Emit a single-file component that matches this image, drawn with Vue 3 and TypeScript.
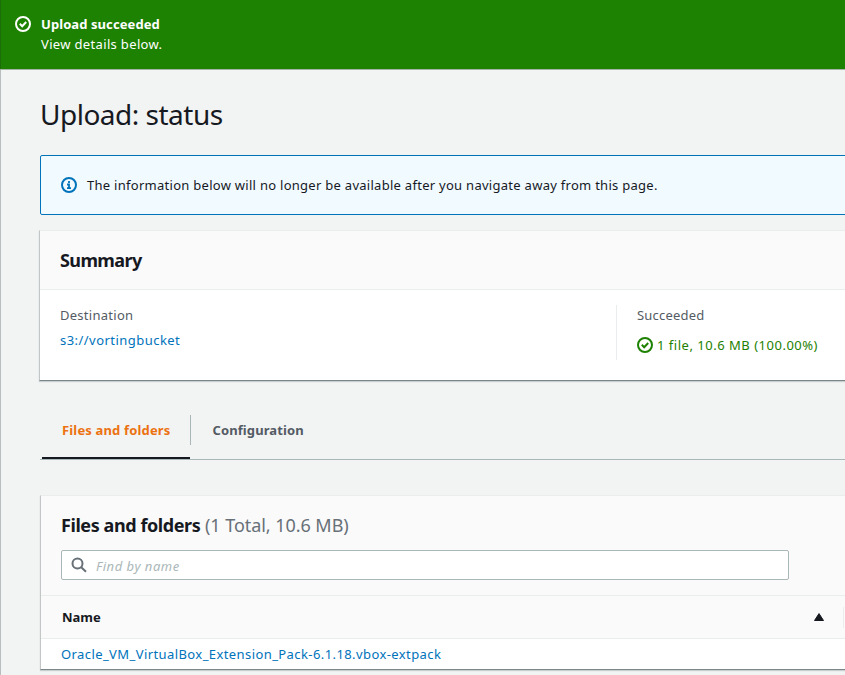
<script setup lang="ts">
import { ref } from 'vue'

interface UploadedFile {
  name: string
}

const tabs: string[] = ['Files and folders', 'Configuration']
const activeTab = ref(0)
const query = ref('')
const files: UploadedFile[] = [{ name: 'Oracle_VM_VirtualBox_Extension_Pack-6.1.18.vbox-extpack' }]
</script>

<template>
  <div class="page">
    <header class="flash">
      <svg class="icon" viewBox="0 0 16 16">
        <circle cx="8" cy="8" r="7" />
        <path d="M4.8 7.8 7.2 10.2 11.2 6" />
      </svg>
      <div class="flash-text">
        <strong><span class="t-flash">Upload succeeded</span></strong>
        <span class="t-view">View details below.</span>
      </div>
    </header>

    <main class="content">
      <h1><span class="t-title">Upload: status</span></h1>

      <div class="info">
        <svg class="icon" viewBox="0 0 16 16">
          <circle cx="8" cy="8" r="7" />
          <path class="thin" d="M8 4v2M6 7.5h2V11M6 11.2h4" />
        </svg>
        <span class="t-info">The information below will no longer be available after you navigate away from this page.</span>
      </div>

      <section class="card summary">
        <div class="card-head"><h2><span class="t-summary">Summary</span></h2></div>
        <div class="columns">
          <div class="column">
            <div class="label"><span class="t-dest">Destination</span></div>
            <a class="link"><span class="t-bucket">s3://vortingbucket</span></a>
          </div>
          <div class="column second">
            <div class="label"><span class="t-succ">Succeeded</span></div>
            <div class="success">
              <svg class="icon" viewBox="0 0 16 16">
                <circle cx="8" cy="8" r="7" />
                <path d="M4.8 7.8 7.2 10.2 11.2 6" />
              </svg>
              <span class="t-count">1 file, 10.6 MB (100.00%)</span>
            </div>
          </div>
        </div>
      </section>

      <nav class="tabs">
        <button
          v-for="(tab, i) in tabs"
          :key="tab"
          class="tab"
          :class="{ active: i === activeTab }"
          @click="activeTab = i"
        >
          <span :class="'t-tab' + i">{{ tab }}</span>
        </button>
      </nav>

      <section class="card files">
        <div class="files-head">
          <h2><span class="t-files">Files and folders</span> <span class="total t-total">(1 Total, 10.6 MB)</span></h2>
          <label class="search">
            <svg viewBox="0 0 16 16">
              <circle cx="6.5" cy="6.5" r="5" />
              <path d="M10.2 10.2 15 14.8" />
            </svg>
            <input v-model="query" placeholder="Find by name" />
          </label>
        </div>
        <div class="thead">
          <span class="t-name">Name</span>
          <svg class="sort" viewBox="0 0 10 8"><path d="M5 .6 9.5 7.5H.5Z" /></svg>
        </div>
        <div v-for="file in files" :key="file.name" class="row">
          <a class="link"><span class="t-file">{{ file.name }}</span></a>
        </div>
      </section>
    </main>
  </div>
</template>

<style>
body {
  background: #f2f3f3;
  overflow: hidden;
}
</style>

<style scoped>
* {
  box-sizing: border-box;
}
.page {
  height: 675px;
  overflow: hidden;
  background: #f2f3f3;
  color: #16191f;
  font: 13px/20px 'Noto Sans', 'Open Sans', sans-serif;
  white-space: nowrap;
  box-shadow: inset 1px 0 #b9bdbd;
}
.icon {
  width: 16px;
  height: 16px;
  flex: none;
  fill: none;
  stroke: currentColor;
  stroke-width: 2;
}
.icon .thin {
  stroke-width: 1.8;
}
.flash {
  display: flex;
  gap: 10px;
  height: 70px;
  padding: 14px 15px;
  background: #1d8102;
  border-bottom: 1px solid #a5b3a9;
  box-shadow: inset 1px 0 #1b6e08;
  color: #fff;
}
.flash .icon {
  margin-top: 2px;
}
.flash-text {
  display: flex;
  flex-direction: column;
}
.flash-text strong {
  font-weight: 700;
}
.content {
  padding: 26px 0 0 40px;
}
h1 {
  margin: 0;
  font-size: 28px;
  line-height: 36px;
  font-weight: 400;
}
h2 {
  margin: 0;
  font-size: 18px;
  line-height: 22px;
  font-weight: 700;
}
.info {
  display: flex;
  align-items: center;
  gap: 10px;
  height: 60px;
  margin: 23px -5px 0 0;
  padding: 0 20px;
  border: 1px solid #0073bb;
  border-radius: 2px;
  background: #f1faff;
}
.info .icon {
  color: #0073bb;
}
.card {
  background: #fff;
  border-top: 1px solid #eaeded;
  border-left: 1px solid #c2c6c7;
  border-bottom: 1px solid #79878b;
  box-shadow: 0 1px 1px #c9cfcf;
}
.summary {
  height: 151px;
  margin: 15px 0 0 -1px;
}
.card-head {
  height: 59px;
  padding: 18px 20px 0;
  background: #fafafa;
  border-bottom: 1px solid #eaeded;
}
.columns {
  display: grid;
  grid-template-columns: 576px 1fr;
  padding-top: 15px;
}
.column {
  height: 55px;
  padding-left: 20px;
}
.column.second {
  border-left: 1px solid #eaeded;
}
.label {
  color: #545b64;
  margin-bottom: 5px;
}
.link {
  color: #0073bb;
}
.success {
  display: flex;
  align-items: center;
  gap: 4px;
  padding-top: 5px;
  color: #1d8102;
}
.tabs {
  display: flex;
  height: 60px;
  margin-top: 19px;
  padding: 15px 0 0 2px;
  border-bottom: 1px solid #aab7b8;
}
.tab {
  position: relative;
  width: 148px;
  padding: 0 0 14px 20px;
  border: 0;
  background: none;
  color: #545b64;
  font: inherit;
  font-weight: 700;
  text-align: left;
}
.tab + .tab {
  padding-left: 22.5px;
}
.tab.active {
  color: #ec7211;
  border-bottom: 2px solid #16191f;
  padding-bottom: 12px;
}
.tab.active::after {
  content: '';
  position: absolute;
  right: -1px;
  top: 0;
  width: 1px;
  height: 30px;
  background: #aab7b8;
}
.files {
  height: 175px;
  margin-top: 35px;
}
.files-head {
  height: 100px;
  padding: 18px 20px 0;
  background: #fafafa;
  border-bottom: 1px solid #eaeded;
}
.total {
  color: #687078;
  font-weight: 400;
}
.search {
  display: flex;
  align-items: center;
  width: 728px;
  height: 30px;
  margin-top: 14px;
  padding: 0 9px;
  border: 1px solid #aab7b8;
  border-radius: 2px;
  background: #fff;
}
.search svg {
  width: 16px;
  height: 16px;
  fill: none;
  stroke: #687078;
  stroke-width: 2;
}
.search input {
  flex: 1;
  margin-left: 9px;
  padding: 2px 0 0;
  border: 0;
  outline: 0;
  background: none;
  font: inherit;
  letter-spacing: 0.52px;
}
.search input::placeholder {
  color: #aab7b8;
  font-style: italic;
}
.thead {
  display: flex;
  align-items: center;
  height: 43px;
  padding: 0 0 0 21px;
  background: #fafafa;
  border-bottom: 1px solid #eaeded;
  font-weight: 700;
}
.thead::after {
  content: '';
  width: 1px;
  height: 21px;
  margin: 0 1px 0 19px;
  background: #eaeded;
}
.sort {
  width: 10px;
  height: 8px;
  margin-left: auto;
  fill: #16191f;
  stroke: #16191f;
  stroke-linejoin: round;
}
.row {
  padding: 5px 20px;
}
.t-flash {
  letter-spacing: 0.08px;
}
.t-view {
  letter-spacing: 0.34px;
}
.t-title {
  letter-spacing: -0.5px;
}
.t-info {
  letter-spacing: 0.278px;
}
.t-summary {
  letter-spacing: -0.6px;
}
.t-dest {
  letter-spacing: 0.27px;
}
.t-bucket {
  letter-spacing: 0.46px;
}
.t-succ {
  letter-spacing: 0.2px;
}
.t-count {
  letter-spacing: 0.51px;
}
.t-tab0 {
  letter-spacing: 0.16px;
}
.t-tab1 {
  letter-spacing: 0.1px;
}
.t-files {
  letter-spacing: -0.42px;
}
.t-total {
  letter-spacing: -0.05px;
}
.t-file {
  letter-spacing: 0.41px;
}
</style>
